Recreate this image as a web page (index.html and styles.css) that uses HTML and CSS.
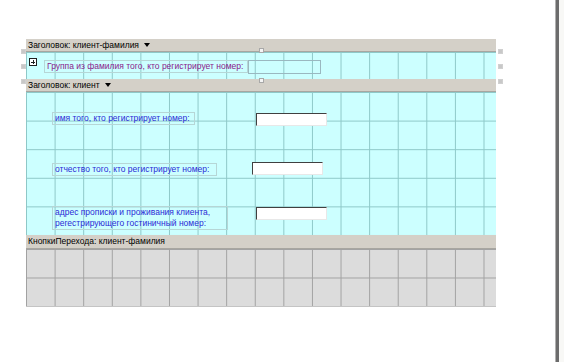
FILE: index.html
```html
<!DOCTYPE html>
<html lang="ru">
<head>
  <meta charset="UTF-8" />
  <title>Форма: клиент-фамилия</title>
  <link rel="stylesheet" href="styles.css">
</head>
<body>
  <div class="pagina">
    <div class="zona">
      <div class="forma">
        <!-- заголовок формы -->
        <div class="barra">Заголовок: клиент-фамилия <span class="flecha"></span></div>
        <div class="seccion cian grupo">
          <span class="mas"></span>
          <span class="etiqueta morada eti-grupo">Группа из фамилия того, кто регистрирует номер:</span>
          <span class="caja-vacia"></span>
        </div>

        <!-- область данных -->
        <div class="barra">Заголовок: клиент <span class="flecha"></span></div>
        <div class="seccion cian cliente">
          <span class="etiqueta azul eti-1">имя того, кто регистрирует номер:</span>
          <span class="campo campo-1"></span>

          <span class="etiqueta azul eti-2">отчество того, кто регистрирует номер:</span>
          <span class="campo campo-2"></span>

          <span class="etiqueta azul eti-3">адрес прописки и проживания клиента,<br>регестрирующего гостиничный номер:</span>
          <span class="campo campo-3"></span>
        </div>

        <!-- кнопки -->
        <div class="barra barra-nav">КнопкиПерехода: клиент-фамилия</div>
        <div class="seccion gris"></div>

        <!-- маркеры выделения -->
        <span class="marca m-izq" style="top: 10px"></span>
        <span class="marca m-izq" style="top: 25px"></span>
        <span class="marca m-izq" style="top: 40px"></span>
        <span class="marca m-der" style="top: 10px"></span>
        <span class="marca m-der" style="top: 25px"></span>
        <span class="marca m-der" style="top: 40px"></span>
        <span class="marca m-med" style="top: 9px"></span>
        <span class="marca m-med" style="top: 39px"></span>
      </div>
    </div>
    <div class="borde"></div>
    <div class="resto"></div>
  </div>
</body>
</html>
```

FILE: styles.css
```css
body {
  margin: 0; padding: 0;
  background: #ffffff;
  font-family: "Liberation Sans", Arial, sans-serif;
}
.pagina {
  display: flex;
  height: 362px;
}
.zona {
  width: 555px;
  padding: 39px 0 0 26px;
  box-sizing: border-box;
}
.forma {
  position: relative;
  width: 470px;
}
.barra {
  height: 12px;
  line-height: 12px;
  background-color: #d4d0c8;
  border-bottom: 1px solid #a8a6a0;
  font-size: 8.5px;
  color: #000;
  padding-left: 2px;
  white-space: nowrap;
}
.barra-nav {
  height: 13px;
  line-height: 13px;
}
.flecha {
  display: inline-block;
  width: 0; height: 0;
  border-left: 3px solid transparent;
  border-right: 3px solid transparent;
  border-top: 4px solid #000;
  margin-left: 3px;
  vertical-align: 1px;
}
.seccion {
  position: relative;
}
.cian {
  background-color: #ccffff;
  background-image:
    linear-gradient(to right, #8ec8c8 1px, transparent 1px),
    linear-gradient(to bottom, #8ec8c8 1px, transparent 1px);
  background-size: 28.6px 28.6px;
  background-position: 0 0;
}
.gris {
  height: 58px;
  background-color: #dcdcdc;
  background-image:
    linear-gradient(to right, #a2a2a2 1px, transparent 1px),
    linear-gradient(to bottom, #a2a2a2 1px, transparent 1px);
  background-size: 28.6px 28.5px;
  border-bottom: 1px solid #c4c4c4;
  box-sizing: border-box;
}
.grupo {
  height: 27px;
}
.cliente {
  height: 143px;
}
.etiqueta {
  position: absolute;
  font-size: 8.5px;
  line-height: 11px;
  padding: 0 4px 0 2px;
  border: 1px solid #b6d6d6;
  white-space: nowrap;
}
.morada { color: #8a1a8a; }
.azul { color: #2b2bd6; }

.mas {
  position: absolute;
  left: 3px; top: 6px;
  width: 6px; height: 6px;
  border: 1px solid #202020;
  background:
    linear-gradient(#202020, #202020) center / 4px 1px no-repeat,
    linear-gradient(#202020, #202020) center / 1px 4px no-repeat,
    #ffffff;
}
.eti-grupo { left: 18px; top: 8px; }
.caja-vacia {
  position: absolute;
  left: 222px; top: 8px;
  width: 71px; height: 12px;
  border: 1px solid #9ab8c0;
}

.campo {
  position: absolute;
  width: 69px; height: 11px;
  background: #ffffff;
  border-top: 1px solid #404040;
  border-left: 1px solid #404040;
  border-right: 1px solid #e8e8e8;
  border-bottom: 1px solid #e8e8e8;
}
.eti-1 { left: 26px; top: 20px; }
.campo-1 { left: 230px; top: 21px; }
.eti-2 { left: 26px; top: 71px; padding-right: 7px; }
.campo-2 { left: 226px; top: 70px; }
.eti-3 { left: 26px; top: 114px; width: 168px; }
.campo-3 { left: 230px; top: 115px; }

.marca {
  position: absolute;
  width: 3px; height: 3px;
  background: #f4f4f4;
  border: 1px solid #a8a8a8;
}
.m-izq { left: -5px; background: #c8c8c8; border-color: #d0d0d0; }
.m-der { left: 472px; background: #c8c8c8; border-color: #d0d0d0; }
.m-med { left: 233px; }

.borde {
  width: 3px;
  height: 362px;
  border-left: 1px solid #b0b0b0;
  background: #6c6c6c;
}
.resto {
  flex: 1;
  background: #f8f8f6;
}
```
